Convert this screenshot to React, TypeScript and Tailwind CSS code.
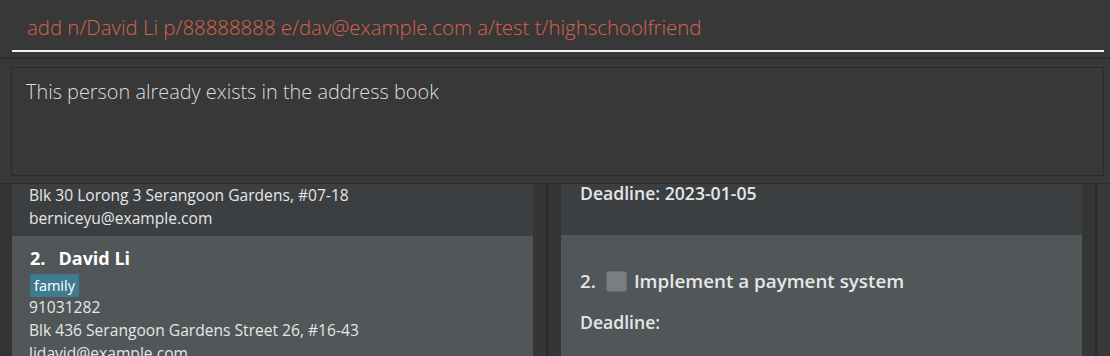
import React from "react";

const font = { fontFamily: '"Open Sans", "Noto Sans", sans-serif' };

export default function App() {
  return (
    <div
      className="w-[1110px] h-[356px] bg-[#383838] overflow-hidden flex flex-col"
      style={font}
    >
      {/* command box */}
      <div className="h-[57px] pl-[12px] pr-[6px] shrink-0">
        <div className="h-[52px] border-b-2 border-[#f2f2f2] flex items-center pl-[15px] pt-[5px]">
          <span className="text-[20.4px] font-light text-[#d9624a] whitespace-nowrap">
            add n/David Li p/88888888 e/dav@example.com a/test t/highschoolfriend
          </span>
        </div>
      </div>
      <div className="h-[2px] bg-[#2d2d2d] shrink-0" />
      {/* result box */}
      <div className="h-[124px] pt-[8px] pl-[11px] pr-[6px] pb-[7px] shrink-0">
        <div className="h-full border border-[#2a2a2a] pl-[14px] pt-[9px]">
          <span className="text-[19.9px] font-light text-[#dcdcdc] whitespace-nowrap">
            This person already exists in the address book
          </span>
        </div>
      </div>
      <div className="h-[1px] bg-[#2a2a2a] shrink-0" />
      {/* panels */}
      <div className="flex flex-1 min-h-0 bg-[#353535]">
        <div className="w-[12px] shrink-0 bg-[#333333]" />
        {/* left list */}
        <div className="w-[521px] shrink-0 flex flex-col text-[#e6e6e6] overflow-hidden">
          <div className="h-[52px] shrink-0 bg-[#3c3f41] pl-[17px] text-[15.6px] leading-[23px]">
            <div>Blk 30 Lorong 3 Serangoon Gardens, #07-18</div>
            <div>berniceyu@example.com</div>
          </div>
          <div className="flex-1 bg-[#515658] pl-[18px] pt-[10px]">
            <div className="flex text-[18px] font-bold leading-[24px] text-white">
              <span>2.</span>
              <span className="ml-[13px]">David Li</span>
            </div>
            <div className="mt-[4px] flex">
              <span className="bg-[#3e7b91] rounded-[2px] px-[4px] h-[23px] leading-[23px] text-[14.5px] text-white">
                family
              </span>
            </div>
            <div className="text-[15.6px] leading-[23px] -mt-[1px] -ml-[1px]">
              <div>91031282</div>
              <div>Blk 436 Serangoon Gardens Street 26, #16-43</div>
              <div>lidavid@example.com</div>
            </div>
          </div>
        </div>
        <div className="w-[13px] shrink-0" />
        <div className="w-[2px] shrink-0 bg-[#2a2a2a]" />
        <div className="w-[13px] shrink-0" />
        {/* right list */}
        <div className="w-[521px] shrink-0 flex flex-col text-[#e6e6e6] overflow-hidden">
          <div className="h-[51px] shrink-0 bg-[#3c3f41] pl-[19px]">
            <div className="text-[17.6px] font-semibold leading-[22px] -mt-[2px]">Deadline: 2023-01-05</div>
          </div>
          <div className="flex-1 bg-[#515658] pl-[19px] pt-[34px]">
            <div className="flex items-center h-[24px] text-[18.8px] font-semibold leading-[24px]">
              <span>2.</span>
              <span className="ml-[10px] w-[21px] h-[21px] rounded-[3px] bg-[#7b7e80] border border-[#6a6d6f] inline-block" />
              <span className="ml-[7px]">Implement a payment system</span>
            </div>
            <div className="mt-[19px] text-[17.6px] font-semibold leading-[20px]">Deadline:</div>
          </div>
        </div>
        <div className="w-[13px] shrink-0" />
        <div className="w-[2px] shrink-0 bg-[#2a2a2a]" />
        <div className="flex-1 bg-[#383838]" />
      </div>
    </div>
  );
}
